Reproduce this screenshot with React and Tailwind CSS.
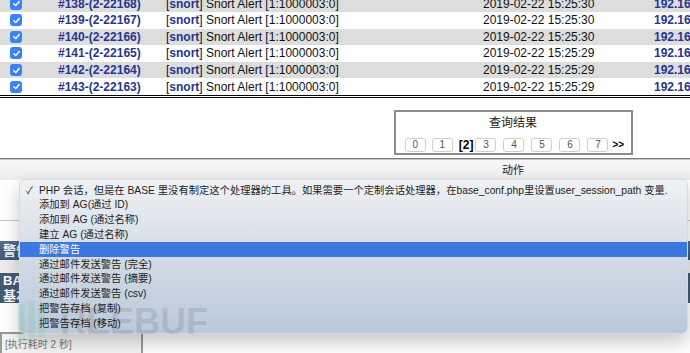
import React from 'react';

const rows = [
  { id: '#138-(2-22168)', time: '2019-02-22 15:25:30', shade: true },
  { id: '#139-(2-22167)', time: '2019-02-22 15:25:30', shade: false },
  { id: '#140-(2-22166)', time: '2019-02-22 15:25:30', shade: true },
  { id: '#141-(2-22165)', time: '2019-02-22 15:25:29', shade: false },
  { id: '#142-(2-22164)', time: '2019-02-22 15:25:29', shade: true },
  { id: '#143-(2-22163)', time: '2019-02-22 15:25:29', shade: false },
];

const menuItems = [
  'PHP 会话，但是在 BASE 里没有制定这个处理器的工具。如果需要一个定制会话处理器，在base_conf.php里设置user_session_path 变量.',
  '添加到 AG(通过 ID)',
  '添加到 AG (通过名称)',
  '建立 AG (通过名称)',
  '删除警告',
  '通过邮件发送警告 (完全)',
  '通过邮件发送警告 (摘要)',
  '通过邮件发送警告 (csv)',
  '把警告存档 (复制)',
  '把警告存档 (移动)',
];

const Checkbox = () => (
  <span className="w-[12px] h-[12px] rounded-[3px] bg-[#3a82f7] flex items-center justify-center">
    <svg width="9" height="9" viewBox="0 0 10 10" fill="none">
      <path d="M2 5.2 L4.2 7.3 L8 2.8" stroke="white" strokeWidth="1.6" strokeLinecap="round" strokeLinejoin="round" />
    </svg>
  </span>
);

const PageBtn = ({ n, className = '' }) => (
  <span className={`w-[21px] h-[14px] rounded-[3px] border border-[#cfcfcf] bg-white text-[10px] text-[#555] flex items-center justify-center ${className}`}>
    {n}
  </span>
);

export default function App() {
  return (
    <div className="w-[690px] h-[353px] overflow-hidden relative bg-white font-['Liberation_Sans','Noto_Sans_CJK_SC',sans-serif]">
      <div className="w-[1026px]">
        {/* alert rows */}
        <div className="-mt-[4.6px] border-b-[3px] border-double border-black">
          {rows.map((r) => (
            <div key={r.id} className={`h-[16.6px] flex items-center text-[12px] text-[#111] ${r.shade ? 'bg-[#dddddd]' : 'bg-white'}`}>
              <div className="w-[58px] pl-[10px] flex items-center">
                <Checkbox />
              </div>
              <div className="w-[108px] font-bold text-[#26358f]">{r.id}</div>
              <div className="w-[317px]">
                [<span className="font-bold text-[#26358f]">snort</span>] Snort Alert [1:1000003:0]
              </div>
              <div className="w-[171px]">{r.time}</div>
              <div className="font-bold text-[#26358f]">192.168.1.10</div>
            </div>
          ))}
        </div>

        {/* pagination */}
        <div className="flex justify-center mt-[12px]">
          <div className="w-[239px] h-[45px] border-2 border-[#8c8c8c] flex flex-col items-center pt-[4px]">
            <div className="text-[12px] text-[#222] leading-[15px]">查询结果</div>
            <div className="flex items-center mt-[5px] ml-[3px] text-[11px]">
              <PageBtn n="0" />
              <PageBtn n="1" className="ml-[6px]" />
              <span className="ml-[6px] font-bold text-[12px] text-black">[2]</span>
              <PageBtn n="3" className="ml-[2px]" />
              <PageBtn n="4" className="ml-[7px]" />
              <PageBtn n="5" className="ml-[7px]" />
              <PageBtn n="6" className="ml-[7px]" />
              <PageBtn n="7" className="ml-[7px]" />
              <span className="ml-[4px] font-bold text-[10px] text-black">&gt;&gt;</span>
            </div>
          </div>
        </div>

        {/* action header */}
        <div className="mt-[3px] border-t border-[#7a7a7a]">
          <div className="border-t border-[#c4c4c4] h-[21px] bg-gradient-to-b from-[#f7f7f7] to-[#ececec] flex items-center justify-center text-[11px] text-[#222]">
            动作
          </div>
        </div>

        <div className="h-[41px] border-b border-[#c8c8c8]" />
        <div className="h-[20px]" />
        <div className="h-[19px] bg-gradient-to-b from-[#556d88] to-[#3f5874] flex items-center pl-[3px] text-white font-bold text-[13px]">
          警告
        </div>
        <div className="h-[13px] bg-[#ececec]" />
        <div className="h-[30px] bg-[#435b77] flex flex-col justify-center pl-[3px] text-white font-bold text-[13px] leading-[15px]">
          <div>BASE</div>
          <div>基本</div>
        </div>
        <div className="h-[29px]" />
        <div className="w-[143px] h-[24px] border-2 border-[#9a9a9a] bg-[#f4f4f4] pl-[3px] pt-[3px] text-[10px] text-[#777]">
          [执行耗时 2 秒]
        </div>
      </div>

      {/* popup menu */}
      <div className="absolute left-[19px] top-[179px] w-[669px] h-[155px] rounded-[6px] border border-[#d6d9de] bg-gradient-to-b from-[#eff1f4] via-[#cdd7e2] via-60% to-[#b9c9db] shadow-[0_8px_18px_rgba(0,0,0,0.22)] pt-[3px] overflow-hidden">
        {menuItems.map((t, i) => (
          <div
            key={i}
            className={`h-[14.8px] flex items-center text-[10.3px] whitespace-nowrap ${i === 4 ? 'bg-[#3b78e0] text-white' : 'text-[#1d1d1d]'}`}
          >
            <span className="w-[19px] pl-[6px] text-[10px]">{i === 0 ? '✓' : ''}</span>
            <span>{t}</span>
          </div>
        ))}
      </div>

      {/* watermark */}
      <div className="absolute left-[18px] top-[300px] flex items-end pointer-events-none">
        <svg width="30" height="42" viewBox="0 0 30 42">
          <rect x="0" y="4" width="7" height="38" fill="rgba(90,190,140,0.18)" />
          <rect x="10" y="0" width="7" height="42" fill="rgba(90,190,140,0.15)" />
          <rect x="20" y="8" width="7" height="30" fill="rgba(90,190,140,0.12)" />
        </svg>
        <span className="ml-[12px] mb-[2px] text-[36px] leading-[36px] font-bold text-black/10">REEBUF</span>
      </div>
    </div>
  );
}
